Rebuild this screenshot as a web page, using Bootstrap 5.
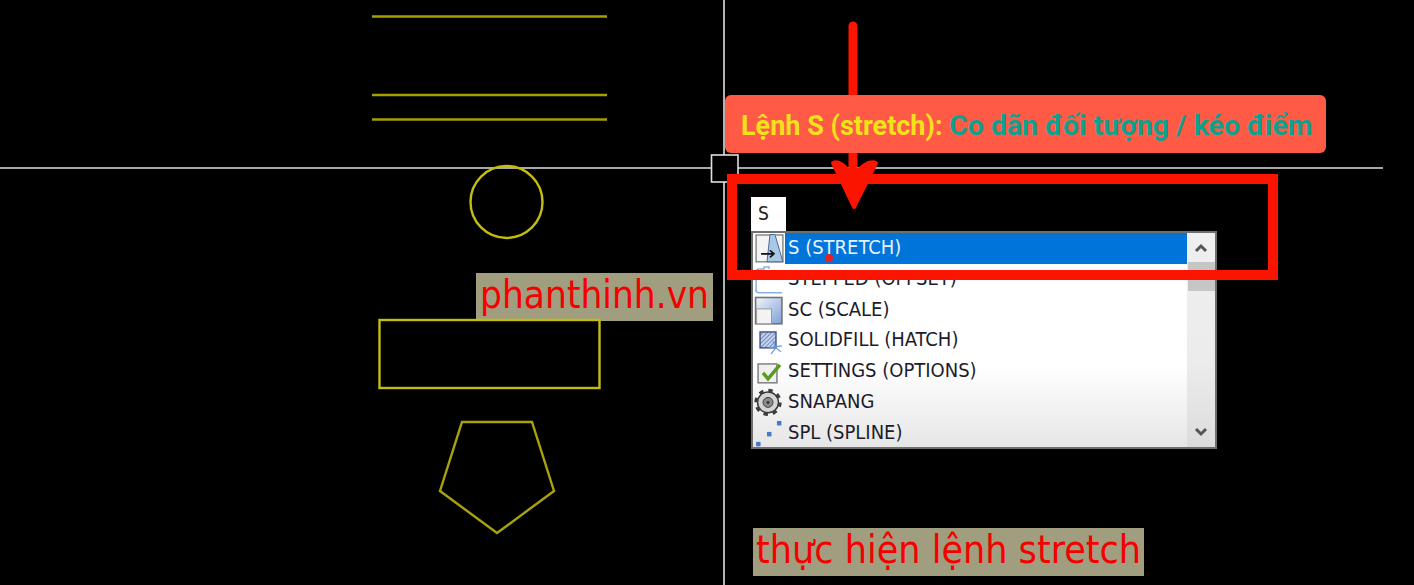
<!DOCTYPE html>
<html lang="en">
<head>
  <meta charset="UTF-8">
  <meta name="viewport" content="width=device-width, initial-scale=1.0">
  <title>Lệnh S (stretch)</title>
  <link href="https://cdn.jsdelivr.net/npm/bootstrap@5.3.3/dist/css/bootstrap.min.css" rel="stylesheet">
  <script src="https://cdn.jsdelivr.net/npm/bootstrap@5.3.3/dist/js/bootstrap.bundle.min.js"></script>
  <style>
    body { background-color: #000; margin: 0; overflow: hidden; }
    .cad-canvas { position: relative; width: 1414px; height: 585px; background: #000; overflow: hidden; }
    .cad-lines { position: absolute; left: 0; top: 0; }
    .site-label { position: absolute; background: #a09e7f; color: #f50000; font-family: "DejaVu Sans", sans-serif; font-stretch: condensed; line-height: 1; white-space: nowrap; }
    .label-site { left: 476px; top: 273px; width: 237px; height: 48px; font-size: 38.4px; padding: 3px 0 0 4px; }
    .label-cmd { left: 753px; top: 528px; width: 391px; height: 48px; font-size: 39px; padding: 2px 0 0 3px; }
    .callout { position: absolute; left: 725px; top: 95px; width: 601px; height: 58px; background: #ff5a46; border-radius: 6px; font-family: Roboto, sans-serif; font-weight: 700; font-size: 27px; padding: 5px 0 0 16px; white-space: nowrap; }
    .callout-key { color: #f2e21c; }
    .callout-desc { color: #12a08e; font-size: 28.4px; }
    .cmd-input { position: absolute; left: 751px; top: 197px; width: 35px; height: 34px; background: #fff; color: #222; font: 19px "DejaVu Sans", sans-serif; font-stretch: condensed; padding: 5px 0 0 7px; }
    .cmd-popup { position: absolute; left: 751px; top: 231px; width: 466px; height: 218px; border: 2px solid #6f6f6f; background: linear-gradient(#fff 0, #fff 62%, #e6e6e6 100%); }
    .cmd-list { width: 434px; }
    .cmd-row { height: 30.8px; color: #1c1c2c; font: 20px "DejaVu Sans", sans-serif; font-stretch: condensed; white-space: nowrap; }
    .cmd-icon { width: 32px; height: 100%; flex: none; }
    .cmd-text { flex: 1; padding-left: 3px; line-height: 28px; }
    .cmd-row.is-active .cmd-text { background: #0074d8; color: #e6f2ff; }
    .cmd-scroll { width: 28px; background: linear-gradient(#efefef, #ececec 60%, #dcdcdc); }
    .scroll-thumb { position: absolute; left: 435px; top: 29px; width: 27px; height: 29px; background: #c6c6c6; }
    .scroll-btn { height: 30px; }
    .red-frame { position: absolute; left: 727px; top: 174px; width: 551px; height: 106px; border: 10px solid #fb1400; }
    .red-dot { position: absolute; left: 825px; top: 254px; width: 8px; height: 8px; border-radius: 50%; background: #ee1c1c; }
    .red-arrow { position: absolute; left: 0; top: 0; }
  </style>
</head>
<body>
  <div class="cad-canvas">
    <div class="site-label label-site">phanthinh.vn</div>

    <svg class="cad-lines" width="1414" height="585" fill="none">
      <g stroke="#a5a000" stroke-width="2.4">
        <path d="M372 16.5H607M372 95H607M372 119.5H607"/>
      </g>
      <g stroke="#dfdfdf" stroke-width="1.6">
        <path d="M0 168H711M738 168H1383M724 0V155M724 182V585"/>
        <rect x="711.5" y="155" width="26.5" height="27"/>
      </g>
      <g stroke="#c4bd10" stroke-width="2.4">
        <circle cx="506.5" cy="202" r="36"/>
        <rect x="379.5" y="320" width="220" height="68"/>
        <path d="M462 422H532L554 491L497 533L440 491Z" stroke="#a8a20c"/>
      </g>
    </svg>

    <svg class="red-arrow" width="1414" height="585" fill="none">
      <path d="M853 26V170" stroke="#fb1400" stroke-width="9" stroke-linecap="round"/>
      <path d="M833 163C840 160 846 168 853 176C860 168 868 160 876 163L854 207Z" fill="#fb1400" stroke="#fb1400" stroke-width="4" stroke-linejoin="round"/>
    </svg>

    <div class="callout d-flex align-items-center"><span class="callout-key">Lệnh S (stretch):&nbsp;</span><span class="callout-desc">Co dãn đối tượng / kéo điểm</span></div>

    <div class="cmd-input">S</div>
    <div class="cmd-popup d-flex">
      <div class="cmd-list d-flex flex-column">
        <div class="cmd-row is-active d-flex">
          <svg class="cmd-icon" viewBox="0 0 32 31">
            <rect x="3" y="2" width="27" height="27" fill="#f4f4f4" stroke="#8a8a8a" stroke-width="1.5"/>
            <path d="M17 1.500H22L30 29H14Z" fill="#a9c8e8" stroke="#4a6a90"/>
            <path d="M8 21H21M17 17.500L21 21L17 24.500" stroke="#111" stroke-width="1.6" fill="none"/>
          </svg>
          <div class="cmd-text">S (STRETCH)</div>
        </div>
        <div class="cmd-row d-flex">
          <svg class="cmd-icon" viewBox="0 0 32 31">
            <path d="M3 28V8Q3 5 6 5H11V3H16V5" fill="none" stroke="#8ab0e0" stroke-width="1.5"/>
            <path d="M3 26Q3 29 6 29H29" fill="none" stroke="#8ab0e0" stroke-width="1.5"/>
          </svg>
          <div class="cmd-text">STEPPED (OFFSET)</div>
        </div>
        <div class="cmd-row d-flex">
          <svg class="cmd-icon" viewBox="0 0 32 31">
            <defs><linearGradient id="scaleFill" x1="0" y1="0" x2="1" y2="1"><stop offset="0" stop-color="#f2f6fc"/><stop offset="1" stop-color="#7f9fd6"/></linearGradient></defs>
            <rect x="2.500" y="2.500" width="26.500" height="26.500" fill="url(#scaleFill)" stroke="#737373" stroke-width="1.6"/>
            <rect x="3.500" y="14" width="15" height="15" fill="#f3f3f3" stroke="#999"/>
          </svg>
          <div class="cmd-text">SC (SCALE)</div>
        </div>
        <div class="cmd-row d-flex">
          <svg class="cmd-icon" viewBox="0 0 32 31">
            <defs><pattern id="hatchFill" width="3" height="3" patternUnits="userSpaceOnUse" patternTransform="rotate(45)"><rect width="3" height="3" fill="#c8d4ee"/><path d="M0 0V3" stroke="#4a68b0" stroke-width="1.400"/></pattern></defs>
            <rect x="7" y="7" width="16" height="16" fill="url(#hatchFill)" stroke="#43598c" stroke-width="1.5"/>
            <path d="M20 16L23 23M16 23L29 21M23 23L18 29M23 23L28 27" stroke="#6c96e0" stroke-width="1.2"/>
          </svg>
          <div class="cmd-text">SOLIDFILL (HATCH)</div>
        </div>
        <div class="cmd-row d-flex">
          <svg class="cmd-icon" viewBox="0 0 32 31">
            <rect x="5" y="8" width="19" height="19" fill="#f0f0f0" stroke="#808080" stroke-width="1.5"/>
            <path d="M10 17L15 23L27 9" fill="none" stroke="#5a9a1e" stroke-width="3.500"/>
          </svg>
          <div class="cmd-text">SETTINGS (OPTIONS)</div>
        </div>
        <div class="cmd-row d-flex">
          <svg class="cmd-icon" viewBox="0 0 32 31">
            <circle cx="15" cy="15.500" r="10.500" fill="#d4d4d4" stroke="#3c3c3c" stroke-width="1.500"/>
            <circle cx="15" cy="15.500" r="12" fill="none" stroke="#3c3c3c" stroke-width="3.500" stroke-dasharray="4.400 5.020"/>
            <circle cx="15" cy="15.500" r="5" fill="#8a8a8a" stroke="#3c3c3c"/>
            <circle cx="15" cy="15.500" r="1.500" fill="#333"/>
          </svg>
          <div class="cmd-text">SNAPANG</div>
        </div>
        <div class="cmd-row d-flex">
          <svg class="cmd-icon" viewBox="0 0 32 31">
            <rect x="24" y="3" width="4.500" height="4.500" fill="#4a78c8"/>
            <rect x="14" y="14" width="4.500" height="4.500" fill="#4a78c8"/>
            <rect x="3" y="24" width="4.500" height="4.500" fill="#4a78c8"/>
          </svg>
          <div class="cmd-text">SPL (SPLINE)</div>
        </div>
      </div>
      <div class="cmd-scroll d-flex flex-column justify-content-between">
        <div class="scroll-btn d-flex align-items-center justify-content-center">
          <svg width="14" height="12" viewBox="0 0 14 12"><path d="M2 9L7 4L12 9" fill="none" stroke="#555" stroke-width="3"/></svg>
        </div>
        <div class="scroll-btn d-flex align-items-center justify-content-center">
          <svg width="14" height="12" viewBox="0 0 14 12"><path d="M2 3L7 8L12 3" fill="none" stroke="#555" stroke-width="3"/></svg>
        </div>
      </div>
      <div class="scroll-thumb"></div>
    </div>

    <div class="red-frame"></div>
    <div class="red-dot"></div>

    <div class="site-label label-cmd">thực hiện lệnh stretch</div>
  </div>
</body>
</html>
